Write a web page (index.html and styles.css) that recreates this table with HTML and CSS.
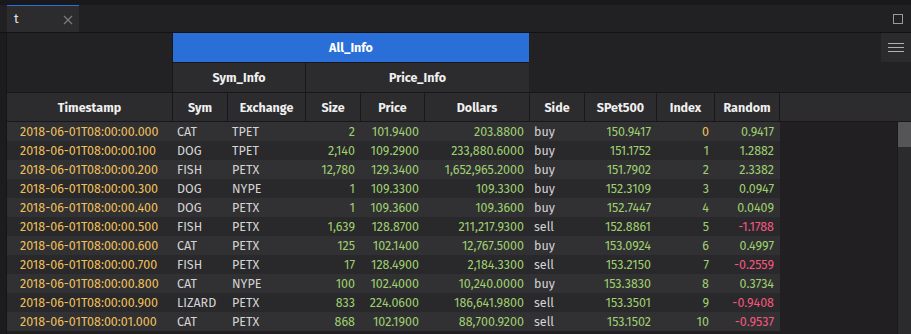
FILE: index.html
```html
<!DOCTYPE html>
<html lang="en">

<head>
    <meta charset="UTF-8" />
    <meta name="viewport" content="width=device-width, initial-scale=1.0" />
    <title>t</title>
    <link rel="stylesheet" href="styles.css">
</head>

<body>
    <div class="top-strip"></div>
    <div class="tab-bar">
        <div class="tab">
            <span class="tab-title">t</span>
            <svg class="tab-close" width="10" height="10" viewBox="0 0 10 10">
                <path d="M1 1 L9 9 M9 1 L1 9" stroke="#7a797c" stroke-width="1.3" />
            </svg>
        </div>
        <div class="tab-spacer"></div>
        <div class="maximize"></div>
    </div>

    <div class="panel">
        <div class="left-strip"></div>
        <div class="grid">
            <div class="header">
                <div class="h-empty corner"></div>
                <div class="h-cell group-all">All_Info</div>
                <div class="h-empty top-right"></div>
                <div class="h-cell group sym-info">Sym_Info</div>
                <div class="h-cell group price-info">Price_Info</div>

                <div class="h-cell">Timestamp</div>
                <div class="h-cell">Sym</div>
                <div class="h-cell">Exchange</div>
                <div class="h-cell">Size</div>
                <div class="h-cell">Price</div>
                <div class="h-cell">Dollars</div>
                <div class="h-cell">Side</div>
                <div class="h-cell">SPet500</div>
                <div class="h-cell">Index</div>
                <div class="h-cell">Random</div>
                <div class="h-cell filler"></div>
            </div>
            <div class="body">
                <div class="rows" id="rows"></div>
                <div class="scrollbar"><div class="thumb"></div></div>
            </div>
            <button class="menu-button">
                <span></span><span></span><span></span>
            </button>
        </div>
    </div>

    <script>
        // ts, sym, exchange, size, price, dollars, side, spet, index, random
        const data = [
            ["00.000", "CAT", "TPET", "2", "101.9400", "203.8800", "buy", "150.9417", "0", "0.9417"],
            ["00.100", "DOG", "TPET", "2,140", "109.2900", "233,880.6000", "buy", "151.1752", "1", "1.2882"],
            ["00.200", "FISH", "PETX", "12,780", "129.3400", "1,652,965.2000", "buy", "151.7902", "2", "2.3382"],
            ["00.300", "DOG", "NYPE", "1", "109.3300", "109.3300", "buy", "152.3109", "3", "0.0947"],
            ["00.400", "DOG", "PETX", "1", "109.3600", "109.3600", "buy", "152.7447", "4", "0.0409"],
            ["00.500", "FISH", "PETX", "1,639", "128.8700", "211,217.9300", "sell", "152.8861", "5", "-1.1788"],
            ["00.600", "CAT", "PETX", "125", "102.1400", "12,767.5000", "buy", "153.0924", "6", "0.4997"],
            ["00.700", "FISH", "PETX", "17", "128.4900", "2,184.3300", "sell", "153.2150", "7", "-0.2559"],
            ["00.800", "CAT", "NYPE", "100", "102.4000", "10,240.0000", "buy", "153.3830", "8", "0.3734"],
            ["00.900", "LIZARD", "PETX", "833", "224.0600", "186,641.9800", "sell", "153.3501", "9", "-0.9408"],
            ["01.000", "CAT", "PETX", "868", "102.1900", "88,700.9200", "sell", "153.1502", "10", "-0.9537"]
        ];

        const rowsDiv = document.getElementById("rows");

        function cell(text, cls) {
            const div = document.createElement("div");
            div.className = "cell " + cls;
            div.textContent = text;
            return div;
        }

        data.forEach((r) => {
            const row = document.createElement("div");
            row.className = "row";
            row.appendChild(cell("2018-06-01T08:00:" + r[0], "date"));
            row.appendChild(cell(r[1], "text"));
            row.appendChild(cell(r[2], "text"));
            row.appendChild(cell(r[3], "num pos"));
            row.appendChild(cell(r[4], "num pos"));
            row.appendChild(cell(r[5], "num pos"));
            row.appendChild(cell(r[6], "text"));
            row.appendChild(cell(r[7], "num pos"));
            row.appendChild(cell(r[8], r[8] === "0" ? "num zero" : "num pos"));
            row.appendChild(cell(r[9], r[9].startsWith("-") ? "num neg" : "num pos"));
            rowsDiv.appendChild(row);
        });
    </script>
</body>

</html>
```

FILE: styles.css
```css
body {
    margin: 0;
    padding: 0;
    width: 911px;
    height: 334px;
    overflow: hidden;
    background-color: #19181a;
    font-family: "Fira Sans", Roboto, sans-serif;
    display: flex;
    flex-direction: column;
}

.top-strip {
    height: 5px;
    background-color: #19181a;
}

.tab-bar {
    display: flex;
    height: 27px;
    background-color: #212023;
    border-bottom: 1px solid #121113;
}

.tab {
    width: 72px;
    margin-left: 7px;
    background-color: #2c2b2e;
    border-top: 1px solid #2a6fd7;
    display: flex;
    align-items: center;
    justify-content: space-between;
    padding: 0 6px 0 7px;
    box-sizing: border-box;
}

.tab-title {
    color: #e2e2e2;
    font-size: 13px;
    margin-top: -2px;
}

.tab-close {
    margin-top: 1px;
}

.tab-spacer {
    flex: 1;
}

.maximize {
    width: 8px;
    height: 8px;
    border: 1px solid #9a999c;
    margin: 9px 8px 0 0;
}

.panel {
    flex: 1;
    display: flex;
    min-height: 0;
}

.left-strip {
    width: 6px;
    background-color: #1c1b1d;
    border-right: 1px solid #151416;
}

.grid {
    flex: 1;
    position: relative;
    display: flex;
    flex-direction: column;
    background-color: #211f22;
}

.header {
    display: grid;
    grid-template-columns: 165px 54px 77px 54px 63px 104px 54px 71px 57px 64px 1fr;
    grid-template-rows: 29px 29px 28px;
    column-gap: 1px;
    row-gap: 1px;
    background-color: #18171a;
    border-bottom: 1px solid #18171a;
}

.h-cell {
    background-color: #2c2b2e;
    color: #f0f0f0;
    font-size: 12.5px;
    font-weight: bold;
    display: flex;
    align-items: center;
    justify-content: center;
}

.h-empty {
    background-color: #222124;
}

.corner {
    grid-column: 1;
    grid-row: 1 / 3;
}

.group-all {
    grid-column: 2 / 7;
    grid-row: 1;
    background-color: #2a6fd7;
    color: #ffffff;
}

.top-right {
    grid-column: 7 / 12;
    grid-row: 1 / 3;
    margin-left: -1px;
}

.sym-info {
    grid-column: 2 / 4;
    grid-row: 2;
}

.price-info {
    grid-column: 4 / 7;
    grid-row: 2;
}

.body {
    flex: 1;
    display: flex;
    min-height: 0;
}

.rows {
    flex: 1;
}

.row {
    display: grid;
    grid-template-columns: 166px 55px 78px 55px 64px 105px 55px 72px 58px 65px;
    height: 19px;
    width: 773px;
    background-color: #29282b;
    font-size: 12.5px;
    line-height: 19px;
}

.row:nth-child(odd) {
    background-color: #313033;
}

.cell {
    white-space: nowrap;
    overflow: hidden;
}

.date {
    color: #efc05a;
    padding-left: 13px;
}

.text {
    color: #d4d4d4;
    padding-left: 4px;
}

.num {
    text-align: right;
    padding-right: 6px;
}

.pos {
    color: #9fd06e;
}

.zero {
    color: #efc05a;
}

.neg {
    color: #f5577e;
}

.scrollbar {
    width: 13px;
    background-color: #2b2a2d;
    border-left: 1px solid #19181a;
}

.thumb {
    height: 25px;
    background-color: #555457;
}

.menu-button {
    position: absolute;
    top: 0;
    right: 0;
    width: 30px;
    height: 29px;
    border: none;
    padding: 0;
    background-color: #2b2a2d;
    display: flex;
    flex-direction: column;
    align-items: center;
    justify-content: center;
    gap: 3px;
}

.menu-button span {
    display: block;
    width: 16px;
    height: 1px;
    background-color: #b0afb2;
}
```
